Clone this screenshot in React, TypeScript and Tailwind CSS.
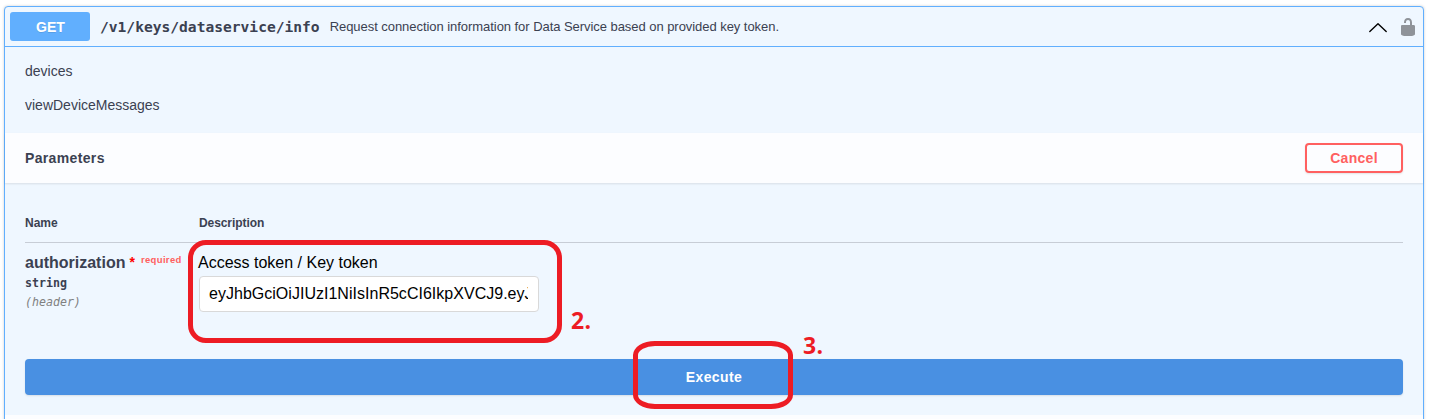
const sans = "font-['Liberation_Sans',Arial,sans-serif]";
const mono = "font-['DejaVu_Sans_Mono',monospace]";

function UnlockIcon() {
  return (
    <svg width="20" height="20" viewBox="0 0 20 20" className="shrink-0 fill-[#8f9399]">
      <path d="M15.8 8H14V5.6C14 2.703 12.665 1 10 1 7.334 1 6 2.703 6 5.6V6h2v-.801C8 3.754 8.797 3 10 3c1.203 0 2 .754 2 2.199V8H4c-.553 0-1 .646-1 1.199V17c0 .549.428 1.139.951 1.307l1.197.387C5.672 18.861 6.55 19 7.1 19h5.8c.549 0 1.428-.139 1.951-.307l1.196-.387c.524-.167.953-.757.953-1.306V9.199C17 8.646 16.352 8 15.8 8z" />
    </svg>
  );
}

function Chevron() {
  return (
    <svg width="20" height="20" viewBox="0 0 20 20" className="shrink-0" fill="none" stroke="#000" strokeWidth="1.4" strokeLinecap="round" strokeLinejoin="round">
      <path d="M1.8 14.6 10 6.8l8.2 7.8" />
    </svg>
  );
}

function Summary() {
  return (
    <header className="flex h-10 items-center border-b border-[#61affe] pr-[5px] pl-[5px]">
      <span className="flex h-[29px] w-20 items-center justify-center rounded-[3px] bg-[#61affe] pl-[1px] text-sm font-bold text-white [text-shadow:0_1px_0_rgba(0,0,0,.1)]">GET</span>
      <span className={`${mono} ml-[10px] text-[14.6px] leading-5 font-bold whitespace-nowrap text-[#3b4151]`}>/v1/keys/dataservice/info</span>
      <span className="ml-[10px] flex-1 text-[13px] tracking-[-0.05px] whitespace-nowrap text-[#3b4151]">Request connection information for Data Service based on provided key token.</span>
      <Chevron />
      <span className="ml-[10px] flex"><UnlockIcon /></span>
    </header>
  );
}

function Parameters() {
  return (
    <div className="px-5 pt-[27px]">
      <div className="flex h-[33px] border-b border-[#c7cdd6] pt-[4px] text-xs leading-[18px] font-bold text-[#3b4151]">
        <span className="w-[174px]">Name</span>
        <span className="tracking-[-0.08px]">Description</span>
      </div>
      <div className="flex h-[116px] pt-[9px]">
        <div className="w-[174px] shrink-0 text-[#3b4151]">
          <div className="flex h-[22px] items-start whitespace-nowrap">
            <span className="text-base leading-[22px] font-bold">authorization</span>
            <span className="ml-[4px] text-[14px] leading-[20px] font-bold text-[#ff0000]">*</span>
            <span className="ml-[6px] text-[9.5px] leading-[15px] font-bold tracking-[0.35px] text-[#ff6060]">required</span>
          </div>
          <div className={`${mono} text-[11.6px] leading-[18px] font-bold`}>string</div>
          <div className={`${mono} text-[11.6px] leading-5 text-[#808080] italic`}>(header)</div>
        </div>
        <div className="relative text-base text-black">
          <div className="-ml-px h-6 leading-[22px] whitespace-nowrap">Access token / Key token</div>
          <div className="flex h-9 w-[340px] items-center rounded border border-[#d9d9d9] bg-white pr-[10px] pl-[9px]">
            <span className="w-full overflow-hidden tracking-[0.02px] whitespace-nowrap">eyJhbGciOiJIUzI1NiIsInR5cCI6IkpXVCJ9.eyJ</span>
          </div>
          <div className="absolute -top-[12px] -left-[11px] h-[103px] w-[374px] rounded-[18px] border-[5px] border-[#ed1c24]" />
          <span className="absolute top-[54px] left-[372px] font-['Open_Sans',sans-serif] text-[23px] leading-7 font-bold tracking-[0.3px] text-[#ed1c24]">2.</span>
        </div>
      </div>
      <div className="relative flex h-9 items-center justify-center rounded bg-[#4990e2] text-sm font-bold tracking-[0.4px] text-white shadow-[0_1px_2px_rgba(0,0,0,.1)]">
        Execute
        <div className="absolute -top-[18px] left-[608px] h-[68px] w-[160px] rounded-[22px/14px] border-[5px] border-[#ed1c24]" />
        <span className="absolute -top-[28px] left-[778px] font-['Open_Sans',sans-serif] text-[23px] leading-7 font-bold text-[#ed1c24]">3.</span>
      </div>
    </div>
  );
}

export default function App() {
  return (
    <main className={`${sans} h-[419px] overflow-hidden bg-white pt-[6px] pr-[7px] pl-1`}>
      <section className="h-[430px] rounded border border-[#61affe] bg-[#eff7ff] shadow-[0_0_3px_rgba(0,0,0,.19)]">
        <Summary />
        <div className="flex h-[86px] flex-col gap-[14px] px-5 pt-[14px] text-sm leading-5 text-[#3b4151]">
          <p>devices</p>
          <p>viewDeviceMessages</p>
        </div>
        <div className="flex h-[50px] items-center justify-between bg-[#fcfdff] px-5 shadow-[0_1px_2px_rgba(0,0,0,.1)]">
          <h4 className="text-sm font-bold tracking-[0.35px] text-[#3b4151]">Parameters</h4>
          <button className="h-[30px] w-[98px] rounded border-2 border-[#ff6060] text-sm font-bold tracking-[0.3px] text-[#ff6060] shadow-[0_1px_2px_rgba(0,0,0,.1)]">Cancel</button>
        </div>
        <Parameters />
        <div className="mt-5 h-4 bg-[#fcfdff]" />
      </section>
    </main>
  );
}
